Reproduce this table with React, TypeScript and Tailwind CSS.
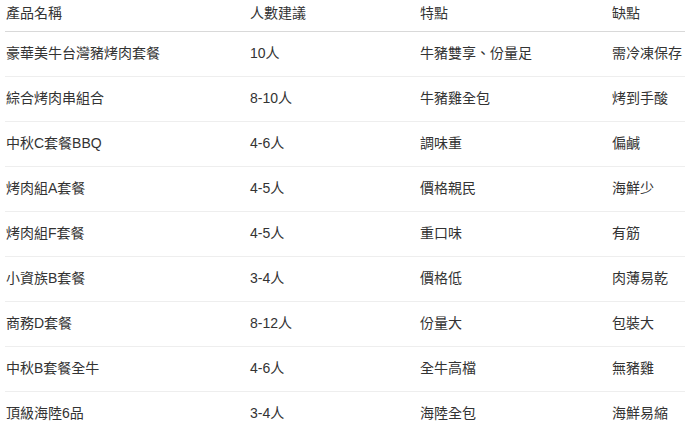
const rows = [
  { name: "豪華美牛台灣豬烤肉套餐", people: "10人", pro: "牛豬雙享、份量足", con: "需冷凍保存" },
  { name: "綜合烤肉串組合", people: "8-10人", pro: "牛豬雞全包", con: "烤到手酸" },
  { name: "中秋C套餐BBQ", people: "4-6人", pro: "調味重", con: "偏鹹" },
  { name: "烤肉組A套餐", people: "4-5人", pro: "價格親民", con: "海鮮少" },
  { name: "烤肉組F套餐", people: "4-5人", pro: "重口味", con: "有筋" },
  { name: "小資族B套餐", people: "3-4人", pro: "價格低", con: "肉薄易乾" },
  { name: "商務D套餐", people: "8-12人", pro: "份量大", con: "包裝大" },
  { name: "中秋B套餐全牛", people: "4-6人", pro: "全牛高檔", con: "無豬雞" },
  { name: "頂級海陸6品", people: "3-4人", pro: "海陸全包", con: "海鮮易縮" },
];

export default function App() {
  return (
    <div className="w-[685px] h-[433px] overflow-hidden bg-white font-['Liberation_Sans','Noto_Sans_CJK_TC',sans-serif] text-[14px] text-[#333]">
      <table className="ml-[5px] w-[720px] border-collapse table-fixed">
        <colgroup>
          <col className="w-[245px]" />
          <col className="w-[170px]" />
          <col className="w-[192px]" />
          <col />
        </colgroup>
        <thead>
          <tr className="h-[31px] border-b border-[#d9d9d9]">
            <th className="text-left font-normal pl-px pb-[3px] align-middle">產品名稱</th>
            <th className="text-left font-normal pb-[3px] align-middle">人數建議</th>
            <th className="text-left font-normal pb-[3px] align-middle">特點</th>
            <th className="text-left font-normal pb-[3px] align-middle">缺點</th>
          </tr>
        </thead>
        <tbody>
          {rows.map((r) => (
            <tr key={r.name} className="h-[45px] border-b border-[#eeeeee]">
              <td className="pl-px">{r.name}</td>
              <td>{r.people}</td>
              <td>{r.pro}</td>
              <td>{r.con}</td>
            </tr>
          ))}
        </tbody>
      </table>
    </div>
  );
}
